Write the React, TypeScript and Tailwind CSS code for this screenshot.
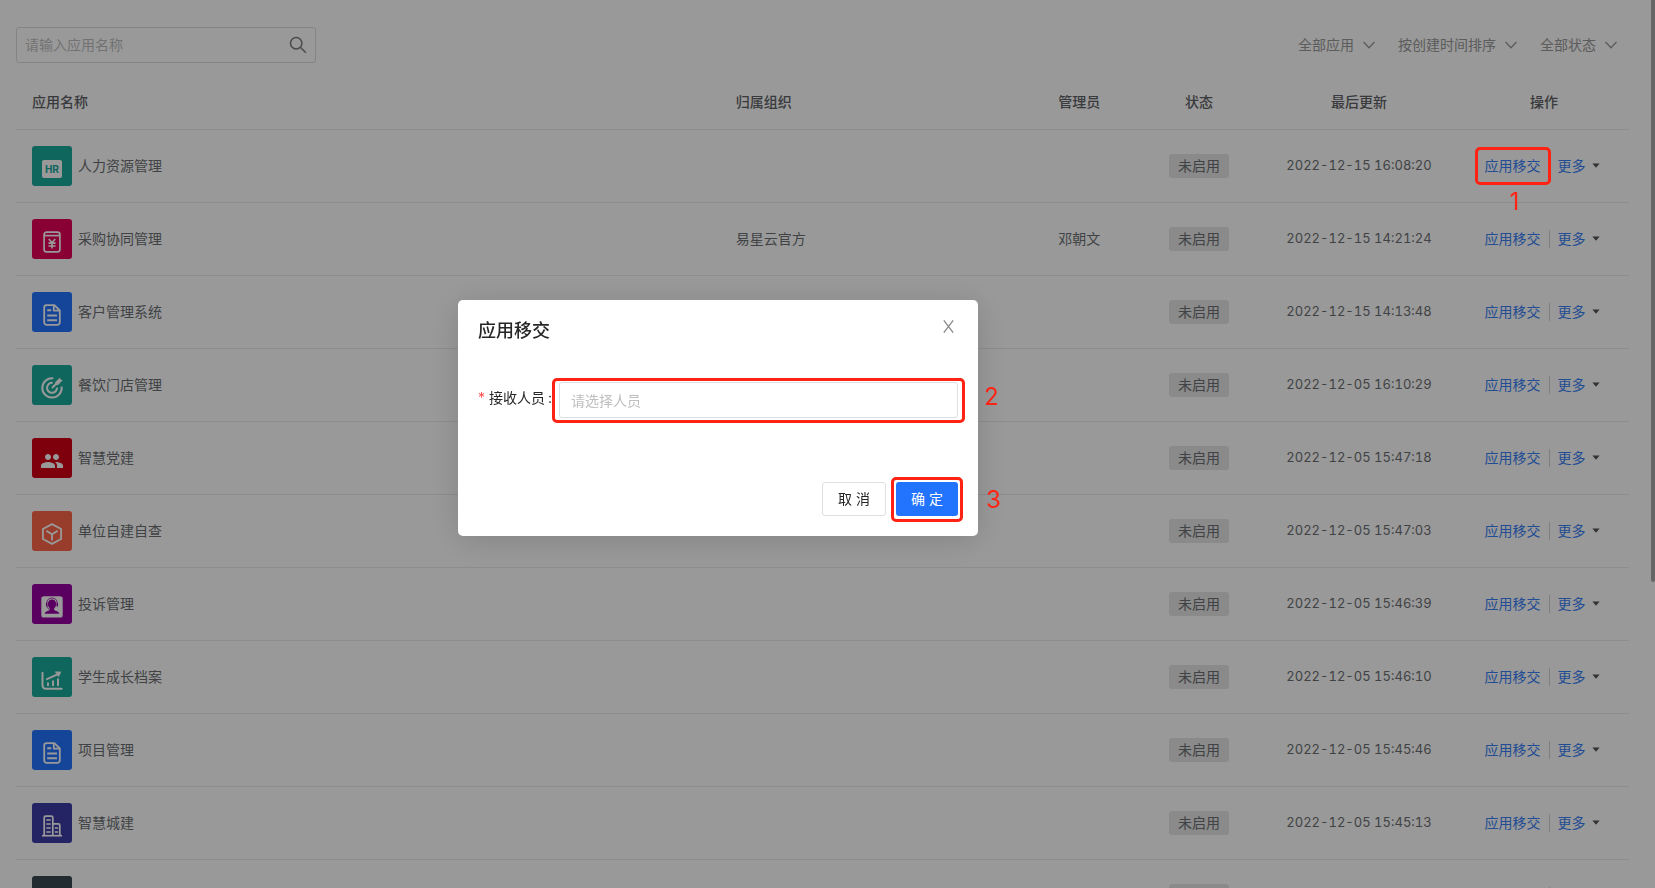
import React from 'react';
import { MdPeople } from 'react-icons/md';

const SearchIcon = () => (
  <svg className="w-[18px] h-[18px] text-[#7a7a7a]" viewBox="0 0 18 18" fill="none" stroke="currentColor" strokeWidth="1.5">
    <circle cx="7.2" cy="7.2" r="5.7" />
    <path d="M11.3 11.3l5.600 5.400" />
  </svg>
);

const ChevronIcon = () => (
  <svg
    className="absolute right-0 w-[14px] h-[14px] pointer-events-none"
    viewBox="0 0 14 14"
    fill="none"
    stroke="currentColor"
    strokeWidth="1.3"
  >
    <path d="M1.500 4l5.500 5.800L12.500 4" />
  </svg>
);

const HrIcon = () => (
  <svg className="w-6 h-6" viewBox="0 0 24 24">
    <rect x="2" y="3" width="20" height="18" rx="2" fill="#fff" />
    <text x="12" y="15.800" textAnchor="middle" fontSize="10.500" fontWeight="700" fontFamily="Roboto, sans-serif" fill="#1aaa99">
      HR
    </text>
  </svg>
);

const PurchaseIcon = () => (
  <svg className="w-6 h-6" viewBox="0 0 24 24" fill="none" stroke="#fff" strokeWidth="1.7">
    <rect x="4.1" y="2.1" width="15.8" height="19.8" rx="2.4" />
    <path d="M4.1 5.6h15.8" />
    <path d="M8.8 9l3.2 3.8L15.2 9M12 12.8v5.8M8.4 13.1h7.2M8.4 16h7.2" />
  </svg>
);

const FileIcon = () => (
  <svg className="w-6 h-6" viewBox="0 0 24 24" fill="none" stroke="#fff" strokeWidth="1.8" strokeLinejoin="round">
    <path d="M14.4 2.1H6.6a2.400 2.400 0 0 0-2.400 2.400v15a2.400 2.400 0 0 0 2.400 2.400h10.800a2.400 2.400 0 0 0 2.400-2.400V7.500z" />
    <path d="M13.8 2.4v5.2h5.8" />
    <path d="M7.200 7.200h4M7.200 12.600h9.800M7.200 17.200h9.800" strokeWidth="2" />
  </svg>
);

const TargetIcon = () => (
  <svg className="w-6 h-6" viewBox="0 0 24 24" fill="none" stroke="#fff" strokeWidth="2">
    <path d="M13.4 2.3A9.7 9.7 0 1 0 21.6 10.5" />
    <path d="M12.6 6.9A5 5 0 1 0 17 11.6" />
    <path d="M12 12l5-5" />
    <path d="M15.2 6.200L20 1.400l.5 2.100 2.200.7L18 9l-2.800.2z" fill="#fff" stroke="none" />
  </svg>
);

const CubeIcon = () => (
  <svg className="w-6 h-6" viewBox="0 0 24 24" fill="none" stroke="#fff" strokeWidth="1.8" strokeLinejoin="round">
    <path d="M12 2.1l9.1 4.9v10L12 21.9 2.9 17V7z" />
    <path d="M6.4 8.9L12 12.2l5.6-3.3M12 12.2v6.2" />
  </svg>
);

const ServiceIcon = () => (
  <svg className="w-6 h-6" viewBox="0 0 24 24">
    <rect x="1.3" y="1.2" width="21.4" height="21.4" rx="2.6" fill="#fff" />
    <g fill="#9600a2">
      <path d="M12 4.600c2.700 0 4.100 1.900 4.100 4.400 0 2-.9 3.800-2.100 4.700v1.100c0 .8 5 1.300 5.300 3.900H4.700c.3-2.600 5.300-3.100 5.300-3.900v-1.100C8.800 12.800 7.900 11 7.900 9c0-2.500 1.400-4.400 4.100-4.400z" />
      <rect x="6" y="7.600" width="1.500" height="4" rx=".7" />
      <rect x="16.500" y="7.600" width="1.500" height="4" rx=".7" />
    </g>
    <path d="M6.800 7.800C7 4.700 9 3 12 3s5 1.700 5.200 4.800M7 11.200c.4 1.900 1.700 3.300 3.600 3.500" fill="none" stroke="#9600a2" strokeWidth=".8" />
  </svg>
);

const ChartIcon = () => (
  <svg className="w-6 h-6" viewBox="0 0 24 24" fill="none" stroke="#fff" strokeWidth="2" strokeLinecap="round">
    <path d="M2.500 4.800v12.700a3.200 3.200 0 0 0 3.200 3.200h16" />
    <path d="M7 11.200l11.400-5.400" />
    <path d="M15.600 3.800l5.300.1-2.200 4.700z" fill="#fff" strokeWidth="0.6" />
    <path d="M8 15.200v2M13 13.200v4M18 11.200v6" />
  </svg>
);

const BuildingIcon = () => (
  <svg className="w-6 h-6" viewBox="0 0 24 24" fill="none" stroke="#fff" strokeWidth="1.700">
    <path d="M4.200 21.400V3.600a1.500 1.500 0 0 1 1.500-1.500h5.600a1.500 1.500 0 0 1 1.500 1.500v17.800" />
    <path d="M12.800 9.800h5.500a1.500 1.500 0 0 1 1.500 1.500v10.100" />
    <path d="M2 21.700h20" />
    <path d="M6.300 6h4.400M6.300 10h4.400M6.300 14h4.400M6.300 18h4.400M14.800 14h3.400M14.800 18h3.400" />
  </svg>
);

const apps = [
  { name: '人力资源管理', color: 'bg-[#1aaa99]', icon: <HrIcon />, updated: '2022-12-15 16:08:20' },
  { name: '采购协同管理', color: 'bg-[#e40058]', icon: <PurchaseIcon />, org: '易星云官方', manager: '邓朝文', updated: '2022-12-15 14:21:24' },
  { name: '客户管理系统', color: 'bg-[#2474ff]', icon: <FileIcon />, updated: '2022-12-15 14:13:48' },
  { name: '餐饮门店管理', color: 'bg-[#1aaa99]', icon: <TargetIcon />, updated: '2022-12-05 16:10:29' },
  { name: '智慧党建', color: 'bg-[#d20016]', icon: <MdPeople className="w-6 h-6 text-white" />, updated: '2022-12-05 15:47:18' },
  { name: '单位自建自查', color: 'bg-[#fd6449]', icon: <CubeIcon />, updated: '2022-12-05 15:47:03' },
  { name: '投诉管理', color: 'bg-[#9600a2]', icon: <ServiceIcon />, updated: '2022-12-05 15:46:39' },
  { name: '学生成长档案', color: 'bg-[#1aaa99]', icon: <ChartIcon />, updated: '2022-12-05 15:46:10' },
  { name: '项目管理', color: 'bg-[#2474ff]', icon: <FileIcon />, updated: '2022-12-05 15:45:46' },
  { name: '智慧城建', color: 'bg-[#3d3da8]', icon: <BuildingIcon />, updated: '2022-12-05 15:45:13' },
  { name: '', color: 'bg-[#3a4850]', icon: null, updated: '' },
];

const filters = ['全部应用', '按创建时间排序', '全部状态'];

function Toolbar() {
  return (
    <div className="flex items-center justify-between pr-[11px]">
      <div className="flex items-center w-[300px] h-9 border border-[#dcdcdc] rounded-[3px] px-2">
        <input
          type="text"
          aria-label="应用名称"
          placeholder="请输入应用名称"
          className="flex-1 min-w-0 bg-transparent outline-none placeholder:text-[#bfbfbf]"
        />
        <button type="button" aria-label="搜索">
          <SearchIcon />
        </button>
      </div>
      <div className="flex items-center gap-[22px] text-[#999]">
        {filters.map((label) => (
          <div key={label} className="relative flex items-center">
            <select aria-label={label} className="appearance-none bg-transparent outline-none pr-[22px]">
              <option>{label}</option>
            </select>
            <ChevronIcon />
          </div>
        ))}
      </div>
    </div>
  );
}

function AppTable() {
  return (
    <table className="w-full table-fixed mt-3 text-left">
      <thead>
        <tr className="h-[54px] border-b border-[#ebebeb]">
          <th className="px-4 font-medium">应用名称</th>
          <th className="w-1/5 px-4 font-medium">归属组织</th>
          <th className="w-[6%] pl-4 font-medium">管理员</th>
          <th className="w-[120px] font-medium text-center">状态</th>
          <th className="w-[200px] font-medium text-center">最后更新</th>
          <th className="w-[170px] font-medium text-center">操作</th>
        </tr>
      </thead>
      <tbody className="text-[#6c6f73]">
        {apps.map((app, index) => (
          <tr key={index} className="h-[73px] border-b border-[#ebebeb]">
            <td className="px-4">
              <div className="flex items-center gap-[6px]">
                <div className={`flex justify-center w-10 h-10 pt-[11px] rounded-[3px] shrink-0 ${app.color}`}>
                  {app.icon}
                </div>
                <span>{app.name}</span>
              </div>
            </td>
            <td className="px-4">{app.org}</td>
            <td className="pl-4">{app.manager}</td>
            <td className="text-center">
              <span className="inline-block w-[60px] h-6 leading-6 rounded-[3px] bg-[#e6e6e6] align-middle">未启用</span>
            </td>
            <td className="text-center text-[13px] tabular-nums">{app.updated}</td>
            <td className="pr-1">
              <div className="flex items-center justify-center gap-2">
                <div className="relative flex">
                  <a href="#transfer" className="text-[#3a7ff5]">应用移交</a>
                  {index === 0 && (
                    <>
                      <span className="absolute z-20 -inset-x-[10px] -inset-y-[9px] border-3 border-[#ff2314] rounded-[5px]" />
                      <span className="absolute z-20 top-[30px] inset-x-0 pl-1 text-center text-2xl leading-8 text-[#ff2314]">1</span>
                    </>
                  )}
                </div>
                <span className="w-px h-[18px] bg-[#d4d4d4]" />
                <button type="button" className="flex items-center gap-[6px] text-[#3a7ff5]">
                  更多
                  <svg className="w-2 h-2 text-[#555]" viewBox="0 0 8 8">
                    <path d="M.4 1.400h7.200L4 5.800z" fill="currentColor" />
                  </svg>
                </button>
              </div>
            </td>
          </tr>
        ))}
      </tbody>
    </table>
  );
}

function TransferDialog() {
  return (
    <div className="fixed inset-0 z-10 flex items-start justify-center bg-black/40 pt-[300px] pr-[219px]">
      <div
        role="dialog"
        aria-labelledby="transfer-title"
        className="w-[520px] px-5 pb-5 bg-white rounded-[5px] text-[#262626] shadow-[0_4px_32px_rgba(0,0,0,0.15)]"
      >
        <div className="flex items-start justify-between pt-[17px] pr-[2px]">
          <h2 id="transfer-title" className="text-lg leading-7 font-medium">应用移交</h2>
          <button type="button" aria-label="关闭" className="p-px pt-[3px]">
            <svg className="w-[13px] h-[13px] text-[#8c8c8c]" viewBox="0 0 13 13" fill="none" stroke="currentColor" strokeWidth="1.300">
              <path d="M1.800.3l9.400 12.400M11.200.3L1.800 12.700" />
            </svg>
          </button>
        </div>

        <div className="flex items-center mt-[37px]">
          <label htmlFor="receiver" className="flex w-[81px] pb-1 whitespace-nowrap">
            <span className="mr-1 text-[#ff4d4f]">*</span>
            接收人员
            <span className="ml-[3px]">:</span>
          </label>
          <div className="relative flex-1">
            <input
              id="receiver"
              type="text"
              placeholder="请选择人员"
              className="block w-full h-9 px-[11px] border border-[#dcdfe3] rounded-[3px] outline-none placeholder:text-[#bfbfbf]"
            />
            <span className="absolute -inset-x-[7px] -top-1 -bottom-[5px] border-3 border-[#ff2314] rounded-[5px] pointer-events-none" />
            <span className="absolute left-full -top-px ml-[26px] text-2xl leading-8 text-[#ff2314]">2</span>
          </div>
        </div>

        <div className="flex justify-end gap-[10px] mt-16">
          <button type="button" className="w-16 h-[34px] border border-[#dcdfe3] rounded-[3px]">取 消</button>
          <div className="relative">
            <button type="button" className="block w-[62px] h-[34px] bg-[#2274ff] text-white rounded-[3px]">确 定</button>
            <span className="absolute -inset-x-[5px] -top-[5px] -bottom-[6px] border-3 border-[#ff2314] rounded-[5px] pointer-events-none" />
            <span className="absolute left-full top-[2px] ml-7 text-2xl leading-8 text-[#ff2314]">3</span>
          </div>
        </div>
      </div>
    </div>
  );
}

export default function App() {
  return (
    <div className="relative h-screen overflow-hidden bg-white pt-[27px] pl-4 pr-[26px] font-[Inter,'Noto_Sans_CJK_SC',sans-serif] text-sm text-[#606266]">
      <Toolbar />
      <AppTable />
      {/* scrollbar thumb */}
      <div className="absolute right-0 top-0 w-1 h-[582px] rounded-b-sm bg-[#aaa]" />
      <TransferDialog />
    </div>
  );
}
